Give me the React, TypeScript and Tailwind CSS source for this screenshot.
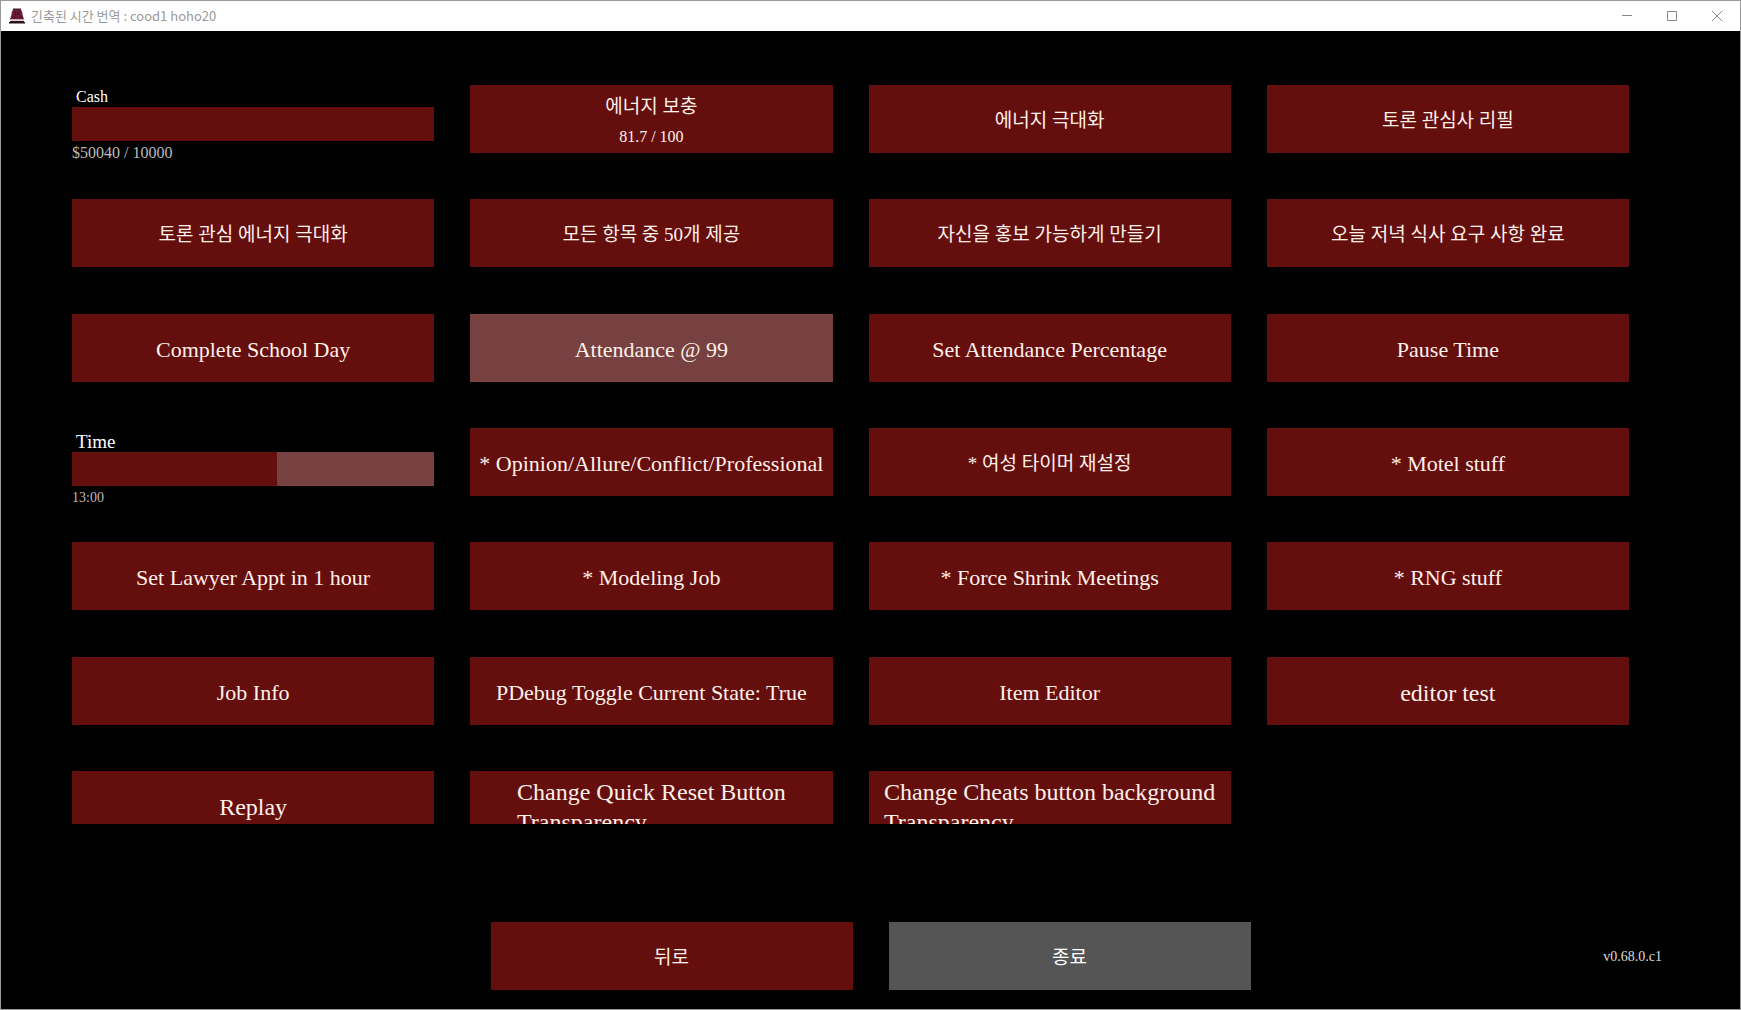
import { useState } from "react";
import clsx from "clsx";

type CheatButton = {
  kind: "button";
  label: string;
  detail?: string;
  size?: "ko" | "en" | "wide";
  active?: boolean;
};

type CheatBar = {
  kind: "bar";
  id: "cash" | "time";
  label: string;
};

type Cheat = CheatButton | CheatBar;

const CHEATS: Cheat[] = [
  { kind: "bar", id: "cash", label: "Cash" },
  { kind: "button", label: "에너지 보충", detail: "81.7 / 100", size: "ko" },
  { kind: "button", label: "에너지 극대화", size: "ko" },
  { kind: "button", label: "토론 관심사 리필", size: "ko" },
  { kind: "button", label: "토론 관심 에너지 극대화", size: "ko" },
  { kind: "button", label: "모든 항목 중 50개 제공", size: "ko" },
  { kind: "button", label: "자신을 홍보 가능하게 만들기", size: "ko" },
  { kind: "button", label: "오늘 저녁 식사 요구 사항 완료", size: "ko" },
  { kind: "button", label: "Complete School Day" },
  { kind: "button", label: "Attendance @ 99", active: true },
  { kind: "button", label: "Set Attendance Percentage" },
  { kind: "button", label: "Pause Time" },
  { kind: "bar", id: "time", label: "Time" },
  { kind: "button", label: "* Opinion/Allure/Conflict/Professional" },
  { kind: "button", label: "* 여성 타이머 재설정", size: "ko" },
  { kind: "button", label: "* Motel stuff" },
  { kind: "button", label: "Set Lawyer Appt in 1 hour" },
  { kind: "button", label: "* Modeling Job" },
  { kind: "button", label: "* Force Shrink Meetings" },
  { kind: "button", label: "* RNG stuff" },
  { kind: "button", label: "Job Info" },
  { kind: "button", label: "PDebug Toggle Current State: True" },
  { kind: "button", label: "Item Editor" },
  { kind: "button", label: "editor test", size: "wide" },
  { kind: "button", label: "Replay", size: "wide" },
  { kind: "button", label: "Change Quick Reset Button\nTransparency", size: "wide" },
  { kind: "button", label: "Change Cheats button background\nTransparency", size: "wide" },
];

const TEXT_SIZES = {
  ko: "text-[19px] leading-[30px]",
  en: "text-[22px] leading-[30px]",
  wide: "text-[24px] leading-[30px]",
};

function TitleBar() {
  return (
    <header className="flex h-[30px] shrink-0 items-center bg-white pl-2 font-['Noto_Sans_CJK_KR',sans-serif] text-[13px] text-[#999]">
      <svg width="16" height="16" viewBox="0 0 16 16" className="mr-[6px]" aria-hidden="true">
        <path d="M4 .5h8V2H4z" fill="#4a1f2c" />
        <path d="M4 2h8c1 1 1.5 2.500 1.500 4.500L15 11.500H1L2.500 6.500C2.500 4.500 3 3 4 2z" fill="#6b1a38" />
        <path d="M6 3l1 4M10 3L9 7M4.500 8l2 2M11 7l1 3" stroke="#481026" fill="none" />
        <path d="M1.500 11.500h13v1.500h-13z" fill="#e6d3d6" />
        <path d="M1 13h14v1h1v1.500H0V14h1z" fill="#2c1216" />
      </svg>
      <h1 className="flex-1 truncate">긴축된 시간 번역 : cood1 hoho20</h1>
      <button type="button" aria-label="Minimize" className="flex h-full w-[45px] items-center justify-center">
        <svg width="10" height="10" viewBox="0 0 10 10" fill="none" stroke="#888"><path d="M0 4.500h10" /></svg>
      </button>
      <button type="button" aria-label="Maximize" className="flex h-full w-[45px] items-center justify-center">
        <svg width="10" height="10" viewBox="0 0 10 10" fill="none" stroke="#888"><path d="M.5.5h9v9h-9z" /></svg>
      </button>
      <button type="button" aria-label="Close" className="flex h-full w-[46px] items-center justify-center">
        <svg width="10" height="10" viewBox="0 0 10 10" fill="none" stroke="#888"><path d="M0 0l10 10M10 0L0 10" /></svg>
      </button>
    </header>
  );
}

function Bar({ id, label, value, max, caption, onChange }: {
  id: string;
  label: string;
  value: number;
  max: number;
  caption: string;
  onChange: (v: number) => void;
}) {
  const pct = Math.min(100, (value / max) * 100);
  const small = id === "cash";
  return (
    <div className="flex h-[68px] flex-col">
      <label
        htmlFor={id}
        className={clsx("shrink-0 pl-1 text-white", small ? "h-[22px] text-[16px] leading-6" : "h-6 text-[19px] leading-7")}
      >
        {label}
      </label>
      <input
        id={id}
        type="range"
        min={0}
        max={max}
        value={Math.min(value, max)}
        onChange={(e) => onChange(Number(e.target.value))}
        className="h-[34px] w-full shrink-0 cursor-pointer appearance-none [&::-webkit-slider-thumb]:appearance-none"
        style={{ background: `linear-gradient(to right, #640e0e ${pct}%, #774141 ${pct}%)` }}
      />
      <output
        htmlFor={id}
        className={clsx("shrink-0 leading-6 text-[#bbb]", small ? "text-[16px]" : "text-[14px]")}
      >
        {caption}
      </output>
    </div>
  );
}

function Button({ label, detail, size = "en", active }: CheatButton) {
  return (
    <button
      type="button"
      aria-pressed={active}
      className={clsx(
        "flex h-[68px] w-full flex-col items-center justify-center text-[#fff0e8]",
        detail ? "pt-[6px]" : "pt-1",
        active ? "bg-[#774141]" : "bg-[#640e0e] hover:bg-[#774141]",
      )}
    >
      <span className={clsx("text-left whitespace-pre", TEXT_SIZES[size])}>{label}</span>
      {detail ? <span className="text-[16px] leading-[30px]">{detail}</span> : null}
    </button>
  );
}

export default function App() {
  const [cash, setCash] = useState(50040);
  const [hour, setHour] = useState(13);

  return (
    <div className="flex h-screen flex-col overflow-hidden border border-[#9a9a9a] bg-black font-['Liberation_Serif','Noto_Sans_CJK_KR',serif]">
      <TitleBar />
      <main className="flex min-h-0 flex-1 flex-col pt-[54px] pb-[19px]">
        <div className="min-h-0 flex-1 overflow-hidden pr-[111px] pl-[71px]">
          <div className="grid h-[754px] grid-cols-4 content-between gap-x-9 auto-rows-[68px]">
            {CHEATS.map((c) => {
              if (c.kind === "button") return <Button key={c.label} {...c} />;
              return c.id === "cash" ? (
                <Bar key={c.id} id={c.id} label={c.label} value={cash} max={10000} caption={`$${cash} / 10000`} onChange={setCash} />
              ) : (
                <Bar key={c.id} id={c.id} label={c.label} value={hour} max={23} caption={`${hour}:00`} onChange={setHour} />
              );
            })}
          </div>
        </div>

        <footer className="mt-[98px] grid shrink-0 grid-cols-[1fr_362px_362px_1fr] items-center gap-x-9">
          <button type="button" className="col-start-2 h-[68px] bg-[#640e0e] pt-1 text-[19px] text-[#fff0e8] hover:bg-[#774141]">
            뒤로
          </button>
          <button type="button" className="h-[68px] bg-[#555] pt-1 text-[19px] text-white">
            종료
          </button>
          <p className="pr-[78px] text-right text-[14px] text-[#ddd]">v0.68.0.c1</p>
        </footer>
      </main>
    </div>
  );
}
